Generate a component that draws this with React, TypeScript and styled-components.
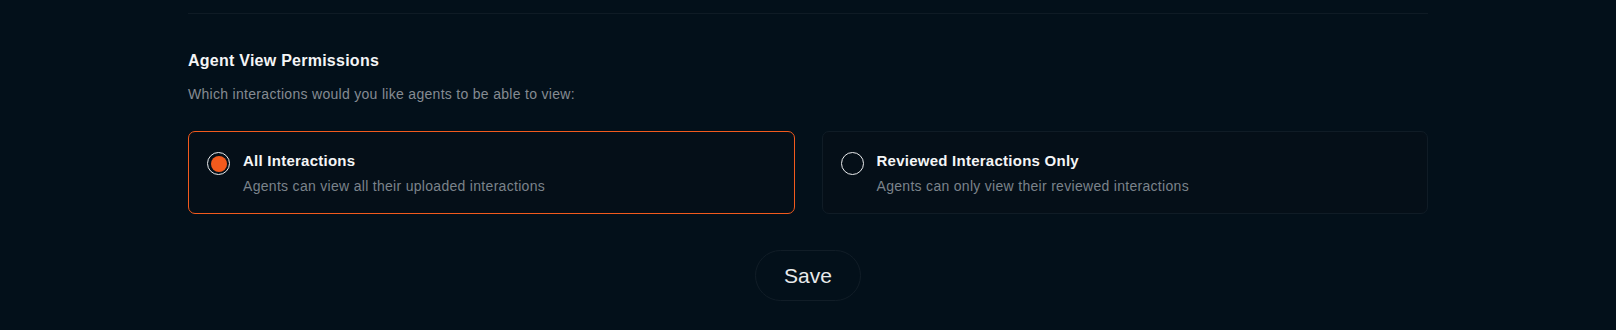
import styled, { createGlobalStyle } from 'styled-components';
import { useState } from 'react';

type ViewMode = 'all' | 'reviewed';

const OPTIONS: { key: ViewMode; title: string; description: string }[] = [
	{
		key: 'all',
		title: 'All Interactions',
		description: 'Agents can view all their uploaded interactions',
	},
	{
		key: 'reviewed',
		title: 'Reviewed Interactions Only',
		description: 'Agents can only view their reviewed interactions',
	},
];

const GlobalStyle = createGlobalStyle`
	html, body {
		margin: 0;
		padding: 0;
		background: #03101a;
	}

	body {
		font-family: 'Liberation Sans', Arial, sans-serif;
		-webkit-font-smoothing: antialiased;
	}
`;

export default function App() {
	const [mode, setMode] = useState<ViewMode>('all');

	return (
		<>
			<GlobalStyle />
			<Page>
				<Divider />
				<Section>
					<Title>Agent View Permissions</Title>
					<Subtitle>Which interactions would you like agents to be able to view:</Subtitle>

					<OptionGrid>
						{OPTIONS.map((opt) => (
							<OptionCard
								key={opt.key}
								$selected={mode === opt.key}
								onClick={() => setMode(opt.key)}
							>
								<Radio $selected={mode === opt.key} />
								<OptionText>
									<OptionTitle>{opt.title}</OptionTitle>
									<OptionDescription>{opt.description}</OptionDescription>
								</OptionText>
							</OptionCard>
						))}
					</OptionGrid>

					<Footer>
						<SaveButton type="button">Save</SaveButton>
					</Footer>
				</Section>
			</Page>
		</>
	);
}

// Styled Components
const Page = styled.div`
	max-width: 1240px;
	margin: 0 auto;
	padding-top: 13px;
`;

const Divider = styled.div`
	height: 1px;
	background: #0f1b25;
`;

const Section = styled.div`
	padding-top: 35px;
	display: flex;
	flex-direction: column;
`;

const Title = styled.h3`
	margin: 0;
	font-size: 16px;
	line-height: 24px;
	font-weight: 700;
	color: #f4f5f6;
	letter-spacing: 0.25px;
`;

const Subtitle = styled.p`
	margin: 11px 0 0;
	font-size: 14px;
	line-height: 20px;
	color: #858b92;
	letter-spacing: 0.3px;
`;

const OptionGrid = styled.div`
	display: grid;
	grid-template-columns: 1fr 1fr;
	gap: 27px;
	margin-top: 27px;
`;

const OptionCard = styled.div<{ $selected: boolean }>`
	display: flex;
	align-items: flex-start;
	gap: 13px;
	padding: 18px 18px 17px;
	border: 1px solid ${(p) => (p.$selected ? '#f25a1d' : '#101c26')};
	border-radius: 7px;
	background: #050f18;
	cursor: pointer;
`;

const Radio = styled.span<{ $selected: boolean }>`
	position: relative;
	flex-shrink: 0;
	box-sizing: border-box;
	width: 23px;
	height: 23px;
	margin-top: 2px;
	border-radius: 50%;
	border: 1.5px solid #e9ebed;

	&::after {
		content: '';
		position: absolute;
		inset: 2.5px;
		border-radius: 50%;
		background: #f25a1d;
		display: ${(p) => (p.$selected ? 'block' : 'none')};
	}
`;

const OptionText = styled.div`
	display: flex;
	flex-direction: column;
	gap: 4px;
`;

const OptionTitle = styled.div`
	font-size: 15px;
	line-height: 22px;
	font-weight: 700;
	color: #f4f5f6;
	letter-spacing: 0.25px;
`;

const OptionDescription = styled.div`
	font-size: 14px;
	line-height: 20px;
	color: #7b838b;
	letter-spacing: 0.3px;
`;

const Footer = styled.div`
	display: flex;
	justify-content: center;
	margin-top: 36px;
`;

const SaveButton = styled.button`
	font-family: 'Liberation Sans', Arial, sans-serif;
	font-size: 21px;
	line-height: 25px;
	padding: 12px 28px;
	color: #e8eaec;
	background: transparent;
	border: 1px solid #111d27;
	border-radius: 999px;
	cursor: pointer;
`;
